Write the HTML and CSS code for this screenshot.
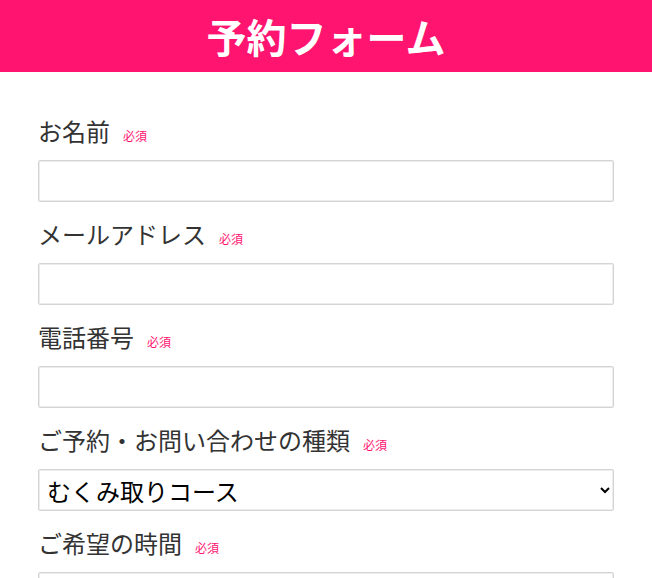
FILE: index.html
```html
<!DOCTYPE html>
<html lang="ja">
<head>
<meta charset="utf-8">
<title>予約フォーム</title>
<link rel="stylesheet" href="styles.css">
</head>
<body>
<header class="site-header">
  <h1 class="site-title">予約フォーム</h1>
</header>
<form class="form">
  <div class="field">
    <label class="label" for="name">お名前<span class="req">必須</span></label>
    <input class="control" id="name" type="text">
  </div>
  <div class="field">
    <label class="label" for="mail">メールアドレス<span class="req">必須</span></label>
    <input class="control" id="mail" type="email">
  </div>
  <div class="field">
    <label class="label" for="tel">電話番号<span class="req">必須</span></label>
    <input class="control" id="tel" type="tel">
  </div>
  <div class="field">
    <label class="label" for="kind">ご予約・お問い合わせの種類<span class="req">必須</span></label>
    <select class="control select" id="kind">
      <option>むくみ取りコース</option>
    </select>
  </div>
  <div class="field">
    <label class="label" for="time">ご希望の時間<span class="req">必須</span></label>
    <input class="control" id="time" type="text">
  </div>
</form>
</body>
</html>
```
FILE: styles.css
```css
html, body {
  margin: 0;
  padding: 0;
  background: #fff;
}
body {
  font-family: "Noto Sans CJK JP", "Noto Sans", sans-serif;
  color: #333;
}
.site-header {
  background: #ff1470;
  height: 72px;
}
.site-title {
  margin: 0;
  font-size: 40px;
  line-height: 72px;
  font-weight: 700;
  color: #fff;
  text-align: center;
}
.form {
  max-width: 576px;
  margin: 0 auto;
  padding-top: 42px;
  display: flex;
  flex-direction: column;
  gap: 15px;
}
.field {
  display: flex;
  flex-direction: column;
  gap: 12px;
}
.label {
  font-size: 24px;
  line-height: 34px;
  height: 34px;
  color: #333;
}
.req {
  font-size: 12px;
  line-height: 1;
  color: #ff1470;
  margin-left: 13px;
}
.control {
  box-sizing: border-box;
  width: 100%;
  height: 42px;
  margin: 0;
  border: 1px solid #d4d4d4;
  border-radius: 2px;
  box-shadow: inset 0 0 0 1px #ececec;
  background: #fff;
  font-family: "Noto Sans CJK JP", "Noto Sans", sans-serif;
  font-size: 24px;
  color: #000;
  padding: 0 8px;
}
.select {
  padding: 0 4px;
}
```
